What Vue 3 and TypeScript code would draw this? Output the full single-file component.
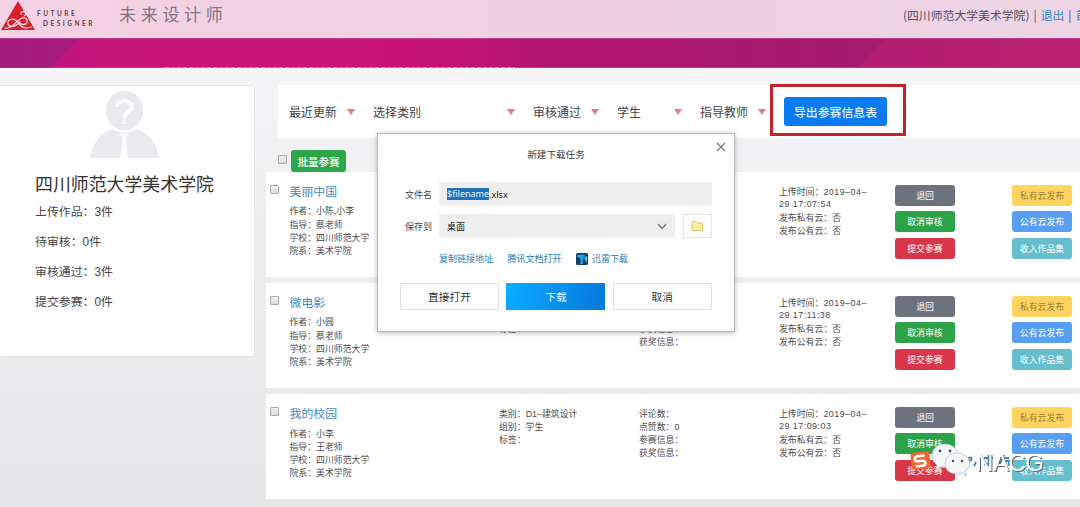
<script setup lang="ts">
interface Work {
  title: string
  author: string
  teacher: string
  category: string
  time: string
}

const stats: { label: string; count: number }[] = [
  { label: '上传作品', count: 3 },
  { label: '待审核', count: 0 },
  { label: '审核通过', count: 3 },
  { label: '提交参赛', count: 0 },
]

const filters: { label: string; width: number }[] = [
  { label: '最近更新', width: 84 },
  { label: '选择类别', width: 160 },
  { label: '审核通过', width: 84 },
  { label: '学生', width: 83 },
  { label: '指导教师', width: 84 },
]

const works: Work[] = [
  { title: '美丽中国', author: '小陈,小李', teacher: '蔡老师', category: 'D1–视觉设计', time: '17:07:54' },
  { title: '微电影', author: '小圆', teacher: '蔡老师', category: 'D1–数字影像', time: '17:11:38' },
  { title: '我的校园', author: '小李', teacher: '王老师', category: 'D1–建筑设计', time: '17:09:03' },
]
</script>

<template>
  <div class="page">
    <header class="top">
      <svg class="logo" viewBox="0 0 36 32">
        <path d="M18 1 L35 30 H1 Z" fill="#d81f2c" />
        <g fill="none" stroke="#f7d5e2" stroke-width="1.3" stroke-linecap="round">
          <path d="M5 28 C10 30 15 23 19 20 C23 16 28 18 27 22 C26 26 20 25 17 21 C12 17 7 20 8 24 C9 28 16 27 20 22" />
          <path d="M21 14 a2.300 2.300 0 1 1 3 2 M19 23 Q22 30 31 27" />
        </g>
      </svg>
      <div class="brand"><span>FUTURE</span><span class="second">DESIGNER</span></div>
      <h1>未来设计师</h1>
      <nav>(四川师范大学美术学院)<b>|</b><a>退出</a><b>|</b><a>首页</a></nav>
    </header>
    <div class="banner">
      <svg viewBox="0 0 1080 30" preserveAspectRatio="none">
        <path d="M0 0H77L50 30H0Z" fill="#94207f" opacity=".6" />
        <path d="M885 0H1080V30H857Z" fill="#c52470" opacity=".4" />
        <path d="M165 29.500H515" stroke="#e3a3c9" stroke-width=".8" stroke-dasharray="4 2" />
      </svg>
    </div>

    <main>
      <aside>
        <svg class="avatar" viewBox="0 0 70 69">
          <g fill="#ebe8ee">
            <ellipse cx="34.500" cy="20.500" rx="18.500" ry="20" />
            <path d="M0 68 C2 54 9 44 22 39 C30 44 40 44 47 39 C60 44 67 54 69 68 Z" />
          </g>
          <path d="M30 44 H38 L36 49 L38 68 H30 L33 49Z" fill="#fff" />
          <path d="M27 17 C27 9 42 9 42 17 C42 22 34 22 34 28" fill="none" stroke="#fff" stroke-width="3.500" />
          <path d="M34 30 L37 34 H31Z" fill="#fff" />
        </svg>
        <h2>四川师范大学美术学院</h2>
        <p v-for="s in stats" :key="s.label">{{ s.label }}：<span class="latin">{{ s.count }}</span>件</p>
      </aside>

      <section class="content">
        <div class="filters">
          <div v-for="f in filters" :key="f.label" class="filter" :style="{ width: f.width + 'px' }">
            <span>{{ f.label }}</span><i></i>
          </div>
          <div class="callout"><button class="export">导出参赛信息表</button></div>
        </div>
        <div class="bulk"><span class="check"></span><button>批量参赛</button></div>

        <article v-for="w in works" :key="w.title">
          <span class="check"></span>
          <div class="info">
            <h3>{{ w.title }}</h3>
            <div>作者：{{ w.author }}</div>
            <div>指导：{{ w.teacher }}</div>
            <div>学校：四川师范大学</div>
            <div>院系：美术学院</div>
          </div>
          <div class="meta">
            <div>类别：<span class="latin">{{ w.category }}</span></div>
            <div>组别：学生</div>
            <div>标签：</div>
          </div>
          <div class="meta">
            <div>评论数：</div>
            <div>点赞数：<span class="latin">0</span></div>
            <div>参赛信息：</div>
            <div>获奖信息：</div>
          </div>
          <div class="meta time">
            <div>上传时间：<span class="latin">2019–04–</span></div>
            <div class="latin">29 {{ w.time }}</div>
            <div>发布私有云：否</div>
            <div>发布公有云：否</div>
          </div>
          <div class="actions">
            <button class="gray">退回</button>
            <button class="green">取消审核</button>
            <button class="red">提交参赛</button>
          </div>
          <div class="actions">
            <button class="yellow">私有云发布</button>
            <button class="blue">公有云发布</button>
            <button class="teal">收入作品集</button>
          </div>
        </article>
      </section>
    </main>

    <div class="dialog">
      <svg class="close" viewBox="0 0 10 10"><path d="M1 1L9 9M9 1L1 9" stroke="#777" stroke-width="1.200" /></svg>
      <h4>新建下载任务</h4>
      <div class="field">
        <label>文件名</label>
        <div class="input file"><mark>$filename</mark>.xlsx</div>
      </div>
      <div class="field">
        <label>保存到</label>
        <div class="input place">
          <span>桌面</span>
          <svg viewBox="0 0 10 7"><path d="M1 1L5 5.500L9 1" fill="none" stroke="#777" stroke-width="1.300" /></svg>
        </div>
        <div class="folder">
          <svg viewBox="0 0 13 12"><path d="M1 1.500H5L6.500 3H11.500V10.500H1Z" fill="#fbeca0" stroke="#dcc762" /></svg>
        </div>
      </div>
      <div class="links">
        <a>复制链接地址</a><a>腾讯文档打开</a>
        <a class="thunder">
          <svg viewBox="0 0 12 12">
            <rect width="12" height="12" rx="1.500" fill="#123f68" />
            <path d="M1 2 Q6 0 10 3 Q7 3 7 11 H4 Q6 5 1 4Z" fill="#2598d5" />
            <path d="M8 5L11 3V10Z" fill="#68bde4" />
          </svg>迅雷下载</a>
      </div>
      <div class="buttons"><button>直接打开</button><button class="primary">下载</button><button>取消</button></div>
    </div>

    <div class="watermark">
      <svg viewBox="0 0 155 50">
        <g transform="rotate(-6 20 25)">
          <rect x="11" y="17" width="19" height="17" rx="3" fill="#ef6735" />
          <path d="M25 21H18Q15 21 15 23.500T18 26H22Q25 26 25 28.500T22 31H15" fill="none" stroke="#fff" stroke-width="2.600" />
        </g>
        <g fill="none" stroke="#3b83b8" stroke-width="1.800">
          <circle cx="70" cy="24" r="1.600" />
          <path d="M76 27L74 31M84 23H93M88.500 20V31M84 30L92 27M99 23H109M104 20L99 31M103 26H109V31" />
        </g>
        <g fill="#f5f6f7" stroke="#a9b6c2" stroke-width=".7">
          <path d="M45 9C37 9 32 14 32 21C32 25 34 28 37 30L35 35L41 32C50 34 58 28 58 20C58 14 52 9 45 9Z" />
          <path d="M57 18C50 18 45 23 45 29C45 35 50 39 57 39L62 38L66 41L65 36C74 30 69 18 57 18Z" />
        </g>
        <g fill="#46525c">
          <circle cx="40" cy="16" r="1.400" /><circle cx="50" cy="16" r="1.400" />
          <circle cx="53" cy="26" r="1.200" /><circle cx="62" cy="26" r="1.200" />
        </g>
        <text x="76" y="36" class="name" textLength="68">NACG</text>
      </svg>
    </div>
  </div>
</template>

<style>
body { margin: 0; overflow: hidden; }
</style>

<style scoped>
* { box-sizing: border-box; }
.page { position: relative; width: 1080px; height: 507px; overflow: hidden; background: linear-gradient(#f5f4f7 68px, #ededf0 260px, #e7e7e9); font-family: "Noto Sans CJK SC", sans-serif; color: #444; }
h1, h2, h3, h4, p { margin: 0; font-weight: 400; }
button { border: 0; padding: 0; font-family: inherit; white-space: nowrap; }
.latin { font-family: "Liberation Sans", "Noto Sans CJK SC", sans-serif; }
.top { height: 38px; display: flex; background: linear-gradient(90deg, #f4d2e4, #f0cfe2 60%, #ecd5e4); white-space: nowrap; overflow: hidden; }
.logo { width: 36px; height: 32px; flex: none; }
.brand { width: 83px; flex: none; padding: 9px 0 0 1px; font: 700 6.500px/9.500px "Lato", sans-serif; letter-spacing: 2.500px; color: #5e4457; }
.brand span { display: block; }
.brand .second { padding-left: 6px; letter-spacing: 2.500px; }
.top h1 { font-size: 17px; line-height: 28px; letter-spacing: 4.700px; color: #827483; width: 784px; flex: none; }
.top nav { font-size: 11.850px; line-height: 29px; color: #5b4b5b; }
.top nav b { font-weight: 400; margin: 0 4px; }
.top a { color: #3a84cc; }
.banner { height: 30px; background: linear-gradient(90deg, #bb167e, #c8157a 12%, #c91378 38%, #b41573 50%, #a51b70 78%, #b42071); border-bottom: 1px solid #a2497e; border-top: 1px solid #ba3b88; }
.banner svg { display: block; width: 1080px; height: 29px; }
main { display: flex; padding-top: 17px; }
aside { width: 256px; height: 272px; margin-left: -1px; flex: none; background: #fff; border: 1px solid #e5e4e8; border-radius: 2px; padding: 4px 0 0 35px; }
.avatar { width: 70px; height: 69px; display: block; margin-left: 55px; }
aside h2 { font-size: 17.900px; line-height: 28px; margin-top: 10px; color: #333; }
aside p { font-size: 11.900px; height: 29.900px; line-height: 28px; color: #444; white-space: nowrap; }
.content { margin-left: 11px; width: 820px; flex: none; }
.filters { height: 53px; margin-left: 12px; padding-left: 11px; background: #fff; display: flex; align-items: center; }
.filter { flex: none; display: flex; align-items: center; font-size: 12px; line-height: 18px; justify-content: space-between; padding-right: 18px; }
.filter i { border: 4px solid transparent; border-top: 6px solid #e47c84; border-bottom: 0; }
.callout { width: 136px; height: 52px; border: 3px solid #c52127; margin-left: -14px; margin-top: -3px; display: flex; align-items: center; justify-content: center; position: relative; flex: none; }
.export { background: #087bf2; color: #e5f4ff; width: 103px; height: 29px; border-radius: 3px; font-size: 11.900px; font-weight: 500; margin-left: -5px; margin-top: 3px; }
.check { display: block; width: 9px; height: 9px; border: 1px solid #a9a9ab; border-radius: 1px; background: linear-gradient(#eee, #ddd); flex: none; }
.bulk { height: 34px; padding-left: 12px; display: flex; align-items: center; }
.bulk .check { margin-top: 8px; }
.bulk button { margin: 12px 0 0 4px; width: 55px; height: 22px; background: #2da74a; border-radius: 3px; color: #fff; font-size: 10.500px; font-weight: 500; }
article { height: 104.500px; margin-bottom: 6.700px; background: #fff; display: flex; padding-top: 12px; font-size: 8.900px; line-height: 13.200px; white-space: nowrap; color: #4c4c4c; }
article .check { margin: 1px 11px 0 4px; }
.info { width: 209px; flex: none; margin-left: -.5px; margin-right: .5px; }
.info h3 { font-size: 11.900px; line-height: 16px; color: #438ac0; margin: -1px 0 5.300px; }
.meta { width: 140px; flex: none; padding-top: .5px; }
.meta div { height: 13.200px; }
.meta.time { width: 116px; }
.time .latin { letter-spacing: .5px; }
.actions { width: 117px; flex: none; padding-top: .5px; }
.actions button { display: block; width: 60px; height: 21px; border-radius: 3px; color: #fff; font-size: 8.900px; margin-bottom: 5.600px; }
.actions .gray { background: #6b747e; }
.actions .green { background: #2ca348; }
.actions .red { background: #d93749; }
.actions .yellow { background: #ffd45e; color: #997f3d; }
.actions .blue { background: #589ff3; }
.actions .teal { background: #66bdcb; }
.dialog { position: absolute; left: 377px; top: 133px; width: 358px; height: 199px; background: #fff; border: 1px solid #bbb; box-shadow: 0 1px 5px rgba(0, 0, 0, .28); font-size: 9px; color: #444; padding: 13px 22px 0 22px; }
.close { position: absolute; right: 8px; top: 8px; width: 10px; height: 10px; }
.dialog h4 { text-align: center; font-size: 9.600px; line-height: 15px; color: #3c3c3c; margin-bottom: 20px; }
.field { display: flex; height: 24px; margin-bottom: 8px; }
.field label { width: 39px; padding-left: 5px; line-height: 25px; flex: none; white-space: nowrap; }
.input { background: #efeff0; display: flex; align-items: center; padding: 0 8px; color: #222; }
.file { width: 274px; font-family: "Noto Sans", sans-serif; font-size: 9px; }
mark { background: #1d72b8; color: #e5f3ff; line-height: 12px; }
.place { width: 236px; justify-content: space-between; }
.place svg { width: 10px; height: 7px; }
.folder { width: 29px; margin-left: 8px; border: 1px solid #e2e2e2; display: flex; align-items: center; justify-content: center; }
.folder svg { width: 13px; height: 12px; }
.links { display: flex; height: 14px; line-height: 14px; padding-left: 39px; margin-top: 14px; gap: 14.500px; white-space: nowrap; }
.links a { color: #2980b1; }
.thunder { display: flex; align-items: center; }
.thunder svg { width: 12px; height: 12px; margin-right: 4px; }
.buttons { display: flex; gap: 7.400px; margin-top: 17px; }
.buttons button { width: 99px; height: 27px; line-height: 25px; flex: none; background: #fff; border: 1px solid #e0e0e0; font-size: 10.700px; color: #333; }
.buttons .primary { background: linear-gradient(105deg, #08adff, #0878dc); border: 0; color: #dff4ff; }
.watermark { position: absolute; left: 900px; top: 435px; width: 155px; height: 50px; }
.watermark svg { display: block; width: 155px; height: 50px; }
.name { font: 24px "Liberation Sans", sans-serif; fill: #fff; filter: drop-shadow(1px 1px .4px #59636b); }
</style>
